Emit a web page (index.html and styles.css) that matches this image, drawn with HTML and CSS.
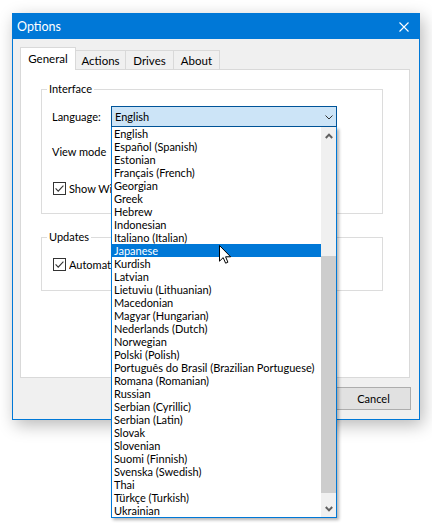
FILE: index.html
```html
<!DOCTYPE html>
<html>
<head>
<meta charset="utf-8">
<link rel="stylesheet" href="styles.css">
</head>
<body>
<div class="desk">
  <div class="window">
    <div class="titlebar">
      <span class="title">Options</span>
      <svg class="close" width="10" height="10" viewBox="0 0 10 10"><path d="M0.5 0.5 L9.5 9.5 M9.5 0.5 L0.5 9.5" stroke="#fff" stroke-width="1.1" fill="none"/></svg>
    </div>
    <div class="client">
      <div class="tabs">
        <div class="tab sel">General</div>
        <div class="tab w-actions">Actions</div>
        <div class="tab w-drives">Drives</div>
        <div class="tab w-about">About</div>
      </div>
      <div class="panel">
        <div class="group g1">
          <span class="legend">Interface</span>
          <div class="row lang-row">
            <span class="lbl">Language:</span>
            <div class="combo">
              <span>English</span>
              <svg width="8" height="5" viewBox="0 0 8 5"><polyline points="0.5,0.5 4,4 7.5,0.5" fill="none" stroke="#333" stroke-width="1"/></svg>
              <div class="list">
                <div class="items">
                  <div class="item">English</div>
                  <div class="item">Español (Spanish)</div>
                  <div class="item">Estonian</div>
                  <div class="item">Français (French)</div>
                  <div class="item">Georgian</div>
                  <div class="item">Greek</div>
                  <div class="item">Hebrew</div>
                  <div class="item">Indonesian</div>
                  <div class="item">Italiano (Italian)</div>
                  <div class="item hl">Japanese</div>
                  <div class="item">Kurdish</div>
                  <div class="item">Latvian</div>
                  <div class="item">Lietuviu (Lithuanian)</div>
                  <div class="item">Macedonian</div>
                  <div class="item">Magyar (Hungarian)</div>
                  <div class="item">Nederlands (Dutch)</div>
                  <div class="item">Norwegian</div>
                  <div class="item">Polski (Polish)</div>
                  <div class="item">Português do Brasil (Brazilian Portuguese)</div>
                  <div class="item">Romana (Romanian)</div>
                  <div class="item">Russian</div>
                  <div class="item">Serbian (Cyrillic)</div>
                  <div class="item">Serbian (Latin)</div>
                  <div class="item">Slovak</div>
                  <div class="item">Slovenian</div>
                  <div class="item">Suomi (Finnish)</div>
                  <div class="item">Svenska (Swedish)</div>
                  <div class="item">Thai</div>
                  <div class="item">Türkçe (Turkish)</div>
                  <div class="item">Ukrainian</div>
                </div>
                <div class="sb">
                  <div class="sb-btn"><svg width="8" height="6" viewBox="0 0 8 6"><polyline points="0.8,5 4,1.6 7.2,5" fill="none" stroke="#606060" stroke-width="2"/></svg></div>
                  <div class="sb-gap"></div>
                  <div class="sb-thumb"></div>
                  <div class="sb-rest"></div>
                  <div class="sb-btn"><svg width="8" height="6" viewBox="0 0 8 6"><polyline points="0.8,1 4,4.4 7.2,1" fill="none" stroke="#606060" stroke-width="2"/></svg></div>
                </div>
              </div>
            </div>
          </div>
          <div class="row view-row"><span class="lbl">View mode</span></div>
          <div class="row chk-row">
            <span class="cb"><svg width="13" height="13" viewBox="0 0 13 13"><rect x="0.5" y="0.5" width="12" height="12" fill="#fff" stroke="#333"/><polyline points="2.6,6.4 5.2,9.1 10.4,3.6" fill="none" stroke="#333" stroke-width="1.1"/></svg></span>
            <span class="cbtext">Show Wizard on startup</span>
          </div>
        </div>
        <div class="group g2">
          <span class="legend">Updates</span>
          <div class="row upd-row">
            <span class="cb"><svg width="13" height="13" viewBox="0 0 13 13"><rect x="0.5" y="0.5" width="12" height="12" fill="#fff" stroke="#333"/><polyline points="2.6,6.4 5.2,9.1 10.4,3.6" fill="none" stroke="#333" stroke-width="1.1"/></svg></span>
            <span class="cbtext">Automatically check for updates</span>
          </div>
        </div>
      </div>
      <div class="buttons">
        <button class="btn">OK</button>
        <button class="btn">Cancel</button>
      </div>
    </div>
  </div>
  <svg class="cursor" width="13" height="20" viewBox="0 0 13 20"><path d="M0.5 0.5 L0.5 16.2 L4.2 12.6 L6.6 18.2 L8.9 17.2 L6.6 11.8 L11.6 11.8 Z" fill="#fff" stroke="#000" stroke-width="1" stroke-linejoin="miter"/></svg>
</div>
</body>
</html>
```
FILE: styles.css
```css
html, body {
  margin: 0;
  background: #ffffff;
}
body {
  font-family: Lato, "Liberation Sans", sans-serif;
  font-size: 11px;
  color: #000;
}
.desk {
  position: relative;
  width: 432px;
  height: 530px;
  padding: 13px 0 0 12px;
  box-sizing: border-box;
  overflow: hidden;
}
.window {
  width: 408px;
  height: 407px;
  box-sizing: border-box;
  border: 1px solid #0078d7;
  background: #f0f0f0;
  box-shadow: 3px 5px 16px rgba(0, 0, 0, 0.28);
  display: flex;
  flex-direction: column;
}
.titlebar {
  height: 25px;
  flex: none;
  background: #0078d7;
  color: #fff;
  display: flex;
  align-items: center;
  justify-content: space-between;
  padding: 0 10px 0 4px;
}
.title {
  font-size: 12.5px;
}
.close {
  display: block;
}
.client {
  flex: 1;
  padding: 8px 9px 9px 7px;
  display: flex;
  flex-direction: column;
}
.tabs {
  display: flex;
  align-items: flex-end;
  height: 23px;
  flex: none;
  font-size: 11.5px;
}
.tab {
  height: 19px;
  margin-bottom: 1px;
  box-sizing: border-box;
  border-top: 1px solid #d9d9d9;
  border-right: 1px solid #d9d9d9;
  background: #f0f0f0;
  display: flex;
  align-items: center;
  justify-content: center;
}
.tab.sel {
  width: 56px;
  height: 23px;
  margin-bottom: 0;
  border-left: 1px solid #d9d9d9;
  background: #fff;
  position: relative;
  z-index: 2;
  padding-bottom: 1px;
}
.w-actions { width: 50px; }
.w-drives { width: 48px; }
.w-about { width: 46px; }
.panel {
  margin-top: -1px;
  height: 309px;
  flex: none;
  box-sizing: border-box;
  border: 1px solid #d9d9d9;
  background: #fff;
  position: relative;
  z-index: 1;
  padding: 0 0 0 20px;
}
.group {
  width: 342px;
  box-sizing: border-box;
  border: 1px solid #dcdcdc;
  padding: 0 0 0 10px;
}
.g1 {
  margin-top: 19px;
  height: 125px;
}
.g2 {
  margin-top: 23px;
  height: 54px;
}
.legend {
  display: block;
  width: fit-content;
  background: #fff;
  padding: 0 2px;
  line-height: 14px;
  height: 14px;
  margin: -8px 0 0 -5px;
}
.row {
  display: flex;
  align-items: center;
  height: 21px;
}
.lang-row { margin-top: 10px; }
.view-row { margin-top: 14px; }
.chk-row { margin-top: 16px; }
.upd-row { margin-top: 10px; }
.lbl {
  width: 59px;
  flex: none;
  white-space: nowrap;
}
.cb {
  width: 13px;
  height: 13px;
  flex: none;
  margin-left: 1px;
}
.cb svg { display: block; }
.cbtext {
  margin-left: 3px;
  white-space: nowrap;
  width: 42px;
  overflow: hidden;
}
.combo {
  position: relative;
  width: 226px;
  height: 21px;
  box-sizing: border-box;
  border: 1px solid #005499;
  background: #cce4f7;
  display: flex;
  align-items: center;
  justify-content: space-between;
  padding: 0 3px 0 3px;
}
.combo > svg {
  display: block;
  margin-top: 1px;
}
.list {
  position: absolute;
  top: calc(100% + 1px);
  left: -1px;
  width: 226px;
  height: 391px;
  box-sizing: border-box;
  border: 1px solid #0078d7;
  border-top: none;
  background: #fff;
  display: flex;
  box-shadow: 2px 2px 3px rgba(0, 0, 0, 0.3);
  z-index: 5;
}
.items {
  flex: 1;
  min-width: 0;
}
.item {
  height: 13px;
  line-height: 13px;
  padding-left: 2px;
  white-space: nowrap;
  overflow: hidden;
}
.item.hl {
  background: #0078d7;
  color: #fff;
}
.sb {
  width: 15px;
  flex: none;
  background: #f0f0f0;
  display: flex;
  flex-direction: column;
}
.sb-btn {
  height: 17px;
  flex: none;
  display: flex;
  align-items: center;
  justify-content: center;
}
.sb-btn svg { display: block; }
.sb-gap {
  height: 112px;
  flex: none;
}
.sb-thumb {
  height: 237px;
  flex: none;
  background: #cdcdcd;
}
.sb-rest {
  flex: 1;
}
.buttons {
  display: flex;
  justify-content: flex-end;
  gap: 6px;
  margin-top: 9px;
  margin-right: -1px;
}
.btn {
  width: 75px;
  height: 23px;
  box-sizing: border-box;
  border: 1px solid #adadad;
  background: #e1e1e1;
  font: inherit;
  color: #000;
  padding: 0;
}
.cursor {
  position: absolute;
  left: 219px;
  top: 245px;
  z-index: 10;
}
```
